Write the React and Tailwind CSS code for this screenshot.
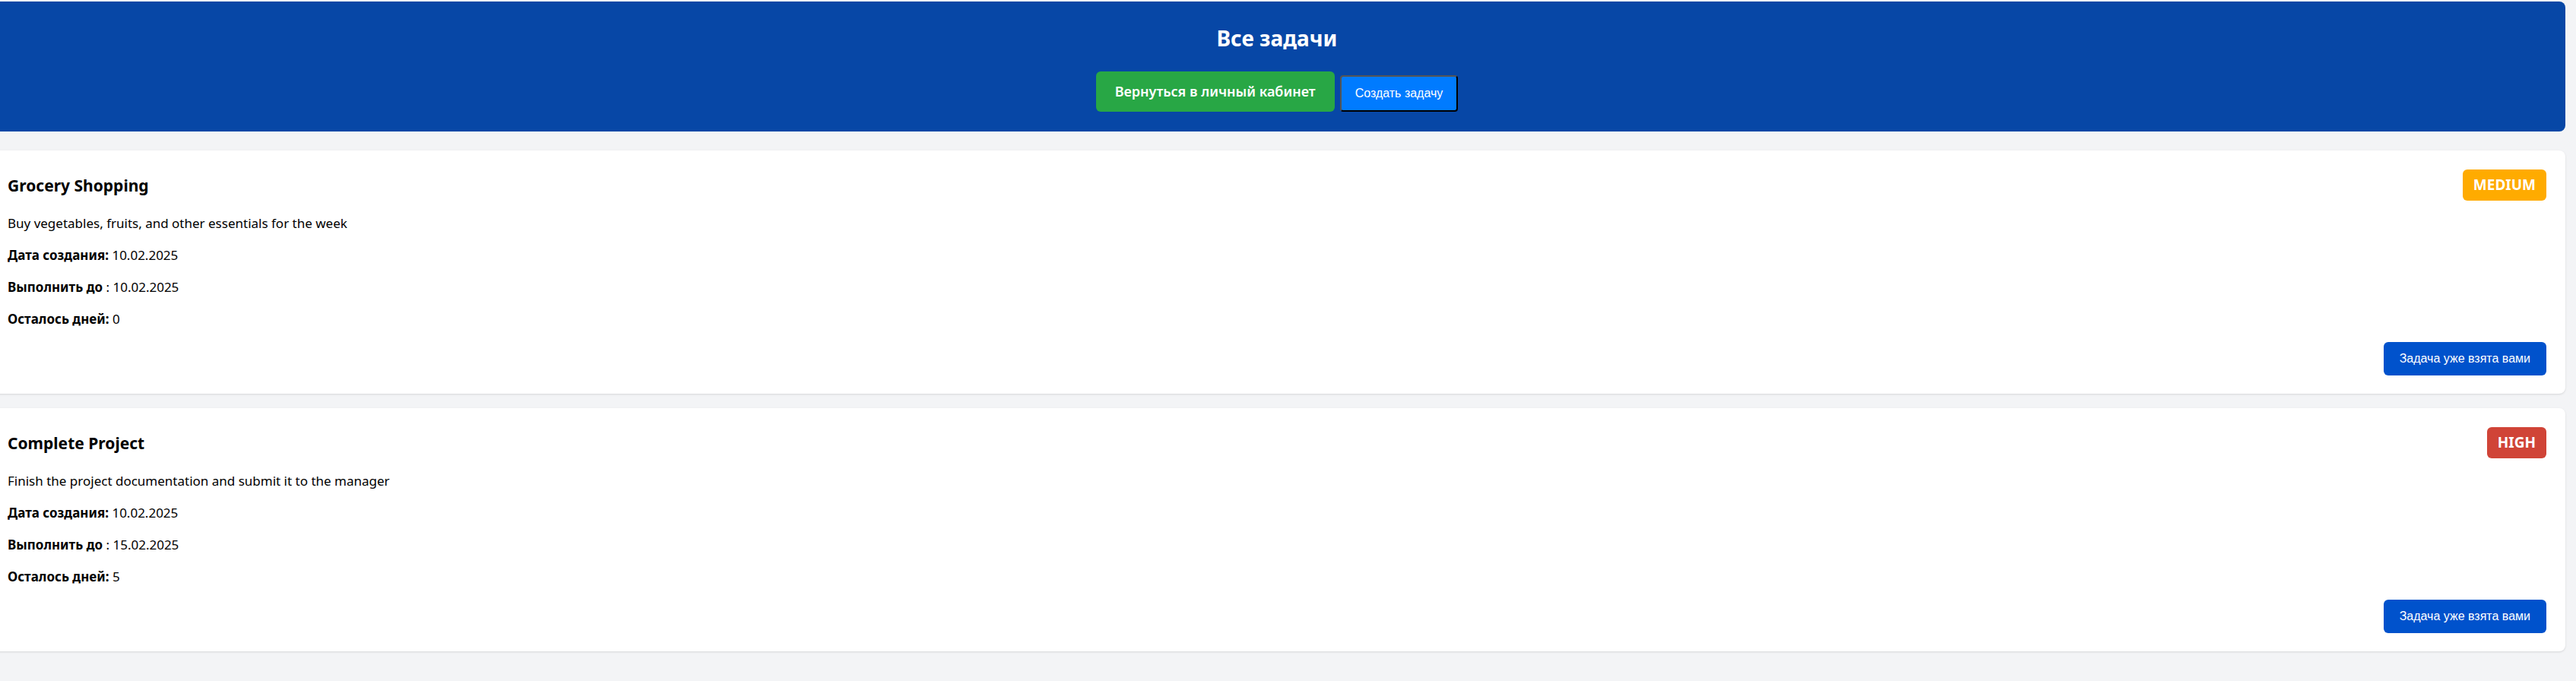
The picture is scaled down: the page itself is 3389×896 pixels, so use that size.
import React from 'react';

const tasks = [
    {
        id: 1,
        title: 'Grocery Shopping',
        description: 'Buy vegetables, fruits, and other essentials for the week',
        created: '10.02.2025',
        deadline: '10.02.2025',
        daysLeft: 0,
        priority: 'MEDIUM',
    },
    {
        id: 2,
        title: 'Complete Project',
        description: 'Finish the project documentation and submit it to the manager',
        created: '10.02.2025',
        deadline: '15.02.2025',
        daysLeft: 5,
        priority: 'HIGH',
    },
];

const priorityClass = {
    MEDIUM: 'bg-[#ffab00]',
    HIGH: 'bg-[#d04437]',
};

const TaskCard = ({ task }) => (
    <div className="bg-white rounded-lg shadow-sm pt-[25px] pb-[24px] px-[25px] flex flex-col gap-[18px]">
        <div className="flex justify-between items-center h-[41px]">
            <h3 className="text-[21px] font-bold leading-7 text-black">{task.title}</h3>
            <span className={`${priorityClass[task.priority]} text-white font-bold text-[19px] leading-[41px] h-[41px] px-[14px] rounded-md`}>
                {task.priority}
            </span>
        </div>
        <p className="text-[17px] leading-6 text-black">{task.description}</p>
        <p className="text-[17px] leading-6 text-black">
            <span className="font-bold">Дата создания:</span> {task.created}
        </p>
        <p className="text-[17px] leading-6 text-black">
            <span className="font-bold">Выполнить до</span> : {task.deadline}
        </p>
        <p className="text-[17px] leading-6 text-black">
            <span className="font-bold">Осталось дней:</span> {task.daysLeft}
        </p>
        <div className="flex justify-end">
            <button className="h-[44px] px-[21px] rounded-md bg-[#0052cc] text-white text-[16px] font-[Liberation_Sans,Arial,sans-serif]">
                Задача уже взята вами
            </button>
        </div>
    </div>
);

export default function App() {
    return (
        <div className="min-h-[896px] bg-[#f3f4f6] pt-[2px] font-[Comic_Sans_MS,Noto_Sans,sans-serif]">
            <div className="-ml-[15px] mr-[14px]">
                {/* Шапка */}
                <div className="bg-[#0747a6] rounded-lg pt-[30px] pb-[26px] flex flex-col items-center gap-[26px] mb-[25px]">
                    <h1 className="text-white text-[28px] font-bold leading-9">Все задачи</h1>
                    <div className="flex items-end gap-[7px]">
                        <button className="bg-[#28a745] text-white text-[18px] font-semibold leading-[27px] py-[13px] px-[25px] rounded-md">
                            Вернуться в личный кабинет
                        </button>
                        <button className="bg-[#007bff] text-white text-[16px] leading-5 py-[12px] px-[18px] rounded border-2 border-t-[#555] border-l-[#555] border-b-black border-r-black font-[Liberation_Sans,Arial,sans-serif]">
                            Создать задачу
                        </button>
                    </div>
                </div>

                {/* Список задач */}
                <div className="flex flex-col gap-[19px]">
                    {tasks.map((task) => (
                        <TaskCard key={task.id} task={task} />
                    ))}
                </div>
            </div>
        </div>
    );
}
